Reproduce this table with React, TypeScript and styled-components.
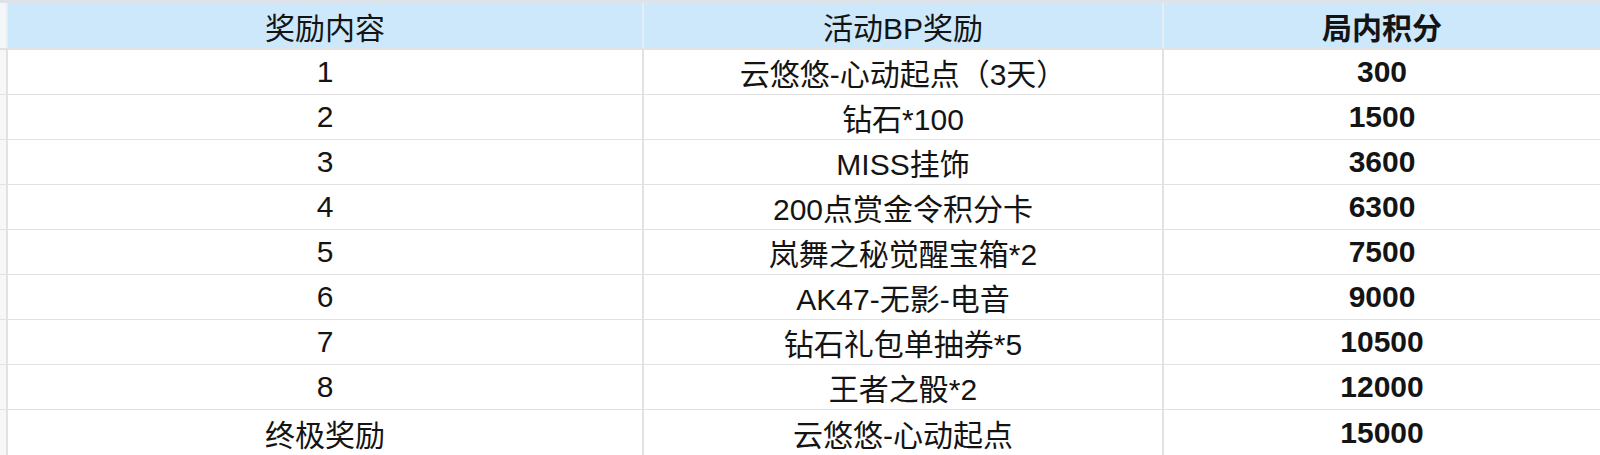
import styled, { createGlobalStyle } from "styled-components"

const GlobalStyle = createGlobalStyle`
    html, body {
        margin: 0;
        padding: 0;
        background: #ffffff;
    }
    body {
        font-family: "Liberation Sans", "Noto Sans CJK SC", sans-serif;
        color: #141414;
    }
`

type Reward = {
    step: string
    prize: string
    points: string
}

const rewards: Reward[] = [
    { step: "1", prize: "云悠悠-心动起点（3天）", points: "300" },
    { step: "2", prize: "钻石*100", points: "1500" },
    { step: "3", prize: "MISS挂饰", points: "3600" },
    { step: "4", prize: "200点赏金令积分卡", points: "6300" },
    { step: "5", prize: "岚舞之秘觉醒宝箱*2", points: "7500" },
    { step: "6", prize: "AK47-无影-电音", points: "9000" },
    { step: "7", prize: "钻石礼包单抽券*5", points: "10500" },
    { step: "8", prize: "王者之骰*2", points: "12000" },
    { step: "终极奖励", prize: "云悠悠-心动起点", points: "15000" },
]

const Sheet = styled.div`
    display: flex;
    flex-direction: column;
    gap: 2px;
    height: 455px;
    padding-bottom: 2px;
    box-sizing: border-box;
    background: #e2e2e2;
    overflow: hidden;
`

const Row = styled.div<{ $height: number; $head?: boolean }>`
    display: grid;
    grid-template-columns: 6px 634px 518px 1fr;
    column-gap: 2px;
    height: ${(p) => p.$height}px;
    flex: none;
    background: ${(p) => (p.$head ? "#e6eef5" : "#e2e2e2")};
    border-top: ${(p) => (p.$head ? "3px solid #dde3e9" : "none")};
`

const Gutter = styled.div<{ $head?: boolean }>`
    background: ${(p) => (p.$head ? "#f4f6f8" : "#f7f7f7")};
`

const Cell = styled.div<{ $head?: boolean; $bold?: boolean }>`
    display: flex;
    align-items: center;
    justify-content: center;
    background: ${(p) => (p.$head ? "#cde8fb" : "#ffffff")};
    font-size: 30px;
    font-weight: ${(p) => (p.$bold ? 700 : 400)};
    white-space: nowrap;
`

export default function App() {
    return (
        <>
            <GlobalStyle />
            <Sheet>
                <Row $height={45} $head>
                    <Gutter $head />
                    <Cell $head>奖励内容</Cell>
                    <Cell $head>活动BP奖励</Cell>
                    <Cell $head $bold>局内积分</Cell>
                </Row>
                {rewards.map((r, i) => (
                    <Row key={r.step} $height={i === rewards.length - 1 ? 46 : 43}>
                        <Gutter />
                        <Cell>{r.step}</Cell>
                        <Cell>{r.prize}</Cell>
                        <Cell $bold>{r.points}</Cell>
                    </Row>
                ))}
            </Sheet>
        </>
    )
}
